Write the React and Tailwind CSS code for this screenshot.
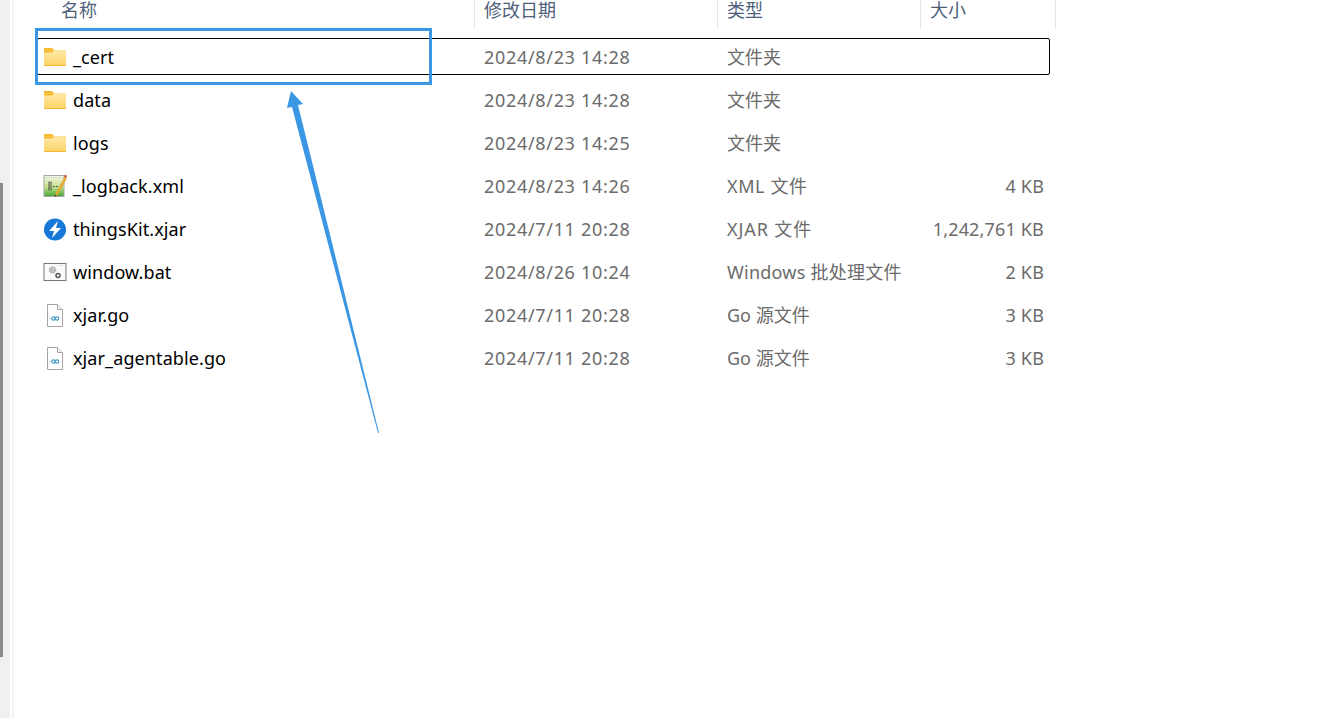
const FONT = "font-['Noto_Sans','Noto_Sans_CJK_SC',sans-serif]"

const files = [
  { name: "_cert", date: "2024/8/23 14:28", type: "文件夹", size: "", icon: "folder", selected: true },
  { name: "data", date: "2024/8/23 14:28", type: "文件夹", size: "", icon: "folder" },
  { name: "logs", date: "2024/8/23 14:25", type: "文件夹", size: "", icon: "folder" },
  { name: "_logback.xml", date: "2024/8/23 14:26", type: "XML 文件", typeClass: "tracking-[0.6px]", size: "4 KB", icon: "xml" },
  { name: "thingsKit.xjar", date: "2024/7/11 20:28", type: "XJAR 文件", typeClass: "tracking-[0.9px]", size: "1,242,761 KB", icon: "xjar" },
  { name: "window.bat", date: "2024/8/26 10:24", type: "Windows 批处理文件", typeClass: "tracking-[0.25px]", size: "2 KB", icon: "bat" },
  { name: "xjar.go", date: "2024/7/11 20:28", type: "Go 源文件", size: "3 KB", icon: "go" },
  { name: "xjar_agentable.go", date: "2024/7/11 20:28", type: "Go 源文件", size: "3 KB", icon: "go" },
]

function FolderIcon() {
  return (
    <svg width="24" height="24" viewBox="0 0 24 24">
      <defs>
        <linearGradient id="folderBody" x1="0" y1="0" x2="0" y2="1">
          <stop offset="0" stopColor="#fee9a8" />
          <stop offset="1" stopColor="#fcd468" />
        </linearGradient>
      </defs>
      <path d="M1 3h8l2.500 2.500H23v2H1z" fill="#f6b92b" />
      <rect x="1" y="5.500" width="22" height="15" fill="url(#folderBody)" />
      <path d="M1 20h22v1H1z" fill="#f2b632" />
      <path d="M1 5.500h10l-2 2H1z" fill="#f6b92b" />
    </svg>
  )
}

function XmlIcon() {
  return (
    <svg width="24" height="24" viewBox="0 0 24 24">
      <defs>
        <linearGradient id="xmlBody" x1="0" y1="0" x2="0" y2="1">
          <stop offset="0" stopColor="#f4f8e8" />
          <stop offset="0.55" stopColor="#c4e08a" />
          <stop offset="1" stopColor="#3fa535" />
        </linearGradient>
      </defs>
      <rect x="1" y="1.500" width="20" height="21" fill="url(#xmlBody)" stroke="#a8a8a8" />
      <path d="M2 3.500h18" stroke="#c8c8c8" strokeDasharray="1 1" />
      <path d="M6 7.500v9M8 7.500v9" stroke="#444" strokeWidth="1" />
      <path d="M10 12.500h5" stroke="#555" strokeDasharray="2 1" />
      <path d="M12 20.500l10-18 2 1.500-10 18z" fill="#e8a832" />
      <path d="M21 2.500l1-2 2 1.500-1 2z" fill="#c9503c" />
      <path d="M12 20.500l-.500 2.500 2.500-1z" fill="#5a4a2a" />
    </svg>
  )
}

function XjarIcon() {
  return (
    <svg width="24" height="24" viewBox="0 0 24 24">
      <circle cx="12" cy="12.500" r="11" fill="#1678d8" />
      <path d="M15 4L6 14h5L9 21 18 11h-5z" fill="#fff" />
    </svg>
  )
}

function BatIcon() {
  return (
    <svg width="24" height="24" viewBox="0 0 24 24">
      <rect x="1" y="3.500" width="22" height="17" fill="#fafafa" stroke="#777" />
      <path d="M17 5.500h4" stroke="#bbb" strokeDasharray="1 1" />
      <circle cx="9.500" cy="10" r="3" fill="#c4c4c4" stroke="#a8a8a8" strokeWidth="1.500" strokeDasharray="1.500 1" />
      <circle cx="15" cy="15.500" r="2" fill="#fff" stroke="#555" strokeWidth="1.500" />
    </svg>
  )
}

function GoIcon() {
  return (
    <svg width="24" height="24" viewBox="0 0 24 24">
      <path d="M4.500 1.500h10l5 5v17h-15z" fill="#fff" stroke="#a4a4a4" />
      <path d="M14.500 1.500v5h5" fill="#f4f4f4" stroke="#a4a4a4" />
      <circle cx="10.500" cy="15.500" r="1.700" fill="none" stroke="#4a9cc8" strokeWidth="1.200" />
      <circle cx="14" cy="15.500" r="1.700" fill="none" stroke="#4a9cc8" strokeWidth="1.200" />
      <path d="M6 15.500h2" stroke="#b4d4e4" />
    </svg>
  )
}

const icons = { folder: FolderIcon, xml: XmlIcon, xjar: XjarIcon, bat: BatIcon, go: GoIcon }

function HeaderCell({ label, className }) {
  return (
    <div className={`h-[28px] border-r border-[#e5e5e5] text-[18px] leading-[20px] text-[#4c607a] ${className}`}>
      {label}
    </div>
  )
}

function FileRow({ file }) {
  const Icon = icons[file.icon]
  return (
    <div className="-ml-[1px] flex h-[43px] items-center">
      <div className={`flex h-[37px] w-[1013px] items-center border text-[18px] leading-[28px] ${file.selected ? "rounded-[2px] border-black" : "border-transparent"}`}>
        <div className="flex w-[446px] items-center pl-[5px]">
          <Icon />
          <span className="ml-[6px] tracking-[0.1px] text-black">{file.name}</span>
        </div>
        <div className="w-[243px] tracking-[0.68px] text-[#6b6b6b]">{file.date}</div>
        <div className={`w-[203px] text-[#6b6b6b] ${file.typeClass || ""}`}>{file.type}</div>
        <div className="w-[114px] text-right tracking-[0.17px] text-[#6b6b6b]">{file.size}</div>
      </div>
    </div>
  )
}

export default function App() {
  return (
    <div className={`relative h-[725px] overflow-hidden bg-white ${FONT}`}>
      <div className="flex h-[718px]">
        <div className="w-[10px] shrink-0 bg-[#f0f0f0] pt-[183px]">
          <div className="h-[474px] w-[3px] bg-[#8a8a8a]" />
        </div>
        <div className="ml-[2px] w-[2px] shrink-0 bg-[#f3f3f3]" />
        <div className="ml-[24px] flex-1">
          <div className="flex">
            <HeaderCell label="名称" className="w-[437px] pl-[23px]" />
            <HeaderCell label="修改日期" className="w-[243px] pl-[9px]" />
            <HeaderCell label="类型" className="w-[203px] pl-[9px]" />
            <HeaderCell label="大小" className="w-[135px] pl-[9px]" />
          </div>
          <div className="pt-[7px]">
            {files.map((file) => (
              <FileRow key={file.name} file={file} />
            ))}
          </div>
        </div>
      </div>

      {/* annotation drawn over the screenshot */}
      <div className="absolute left-[35px] top-[28px] h-[57px] w-[397px] border-[3px] border-[#3b97e3]" />
      <svg className="absolute left-[280px] top-[85px]" width="110" height="355" viewBox="280 85 110 355">
        <polygon points="291,91 303,104 298,105 379,433 378,433 292,107 287,108" fill="#3b97e3" />
      </svg>
    </div>
  )
}
